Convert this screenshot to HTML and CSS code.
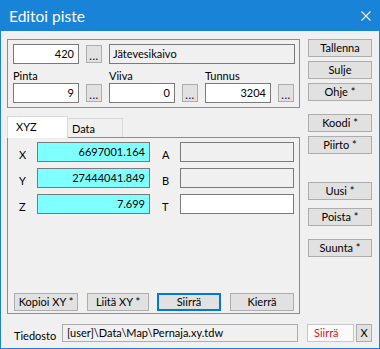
FILE: index.html
```html
<!DOCTYPE html>
<html lang="fi">
<head>
    <meta charset="UTF-8">
    <meta name="viewport" content="width=device-width, initial-scale=1.0">
    <title>Editoi piste</title>
    <link rel="stylesheet" href="styles.css">
</head>
<body>
    <div class="window">
        <div class="titlebar">
            <span>Editoi piste</span>
            <svg class="close" width="10" height="10" viewBox="0 0 10 10">
                <path d="M0.5 0.5 L9.5 9.5 M9.5 0.5 L0.5 9.5" stroke="#fff" stroke-width="1.1" fill="none"/>
            </svg>
        </div>

        <div class="client">
            <div class="main">
                <div class="group">
                    <div class="row">
                        <div class="edit num">420</div>
                        <div class="btn dots">...</div>
                        <div class="edit ro name">Jätevesikaivo</div>
                    </div>
                    <div class="row">
                        <div class="col">
                            <div class="lbl">Pinta</div>
                            <div class="pair">
                                <div class="edit num">9</div>
                                <div class="btn dots">...</div>
                            </div>
                        </div>
                        <div class="col">
                            <div class="lbl">Viiva</div>
                            <div class="pair">
                                <div class="edit num">0</div>
                                <div class="btn dots">...</div>
                            </div>
                        </div>
                        <div class="col">
                            <div class="lbl">Tunnus</div>
                            <div class="pair">
                                <div class="edit num">3204</div>
                                <div class="btn dots">...</div>
                            </div>
                        </div>
                    </div>
                </div>

                <div class="tabs">
                    <div class="tab active">XYZ</div>
                    <div class="tab">Data</div>
                </div>
                <div class="panel">
                    <div class="coord">
                        <div class="clbl">X</div>
                        <div class="edit num xyz">6697001.164</div>
                        <div class="clbl second">A</div>
                        <div class="edit ro extra"></div>
                    </div>
                    <div class="coord">
                        <div class="clbl">Y</div>
                        <div class="edit num xyz">27444041.849</div>
                        <div class="clbl second">B</div>
                        <div class="edit ro extra"></div>
                    </div>
                    <div class="coord">
                        <div class="clbl">Z</div>
                        <div class="edit num xyz">7.699</div>
                        <div class="clbl second">T</div>
                        <div class="edit extra"></div>
                    </div>
                    <div class="actions">
                        <div class="btn w64">Kopioi XY *</div>
                        <div class="btn w62">Liitä XY *</div>
                        <div class="btn w64 default">Siirrä</div>
                        <div class="btn w64">Kierrä</div>
                    </div>
                </div>
            </div>

            <div class="side">
                <div class="bgroup">
                    <div class="btn">Tallenna</div>
                    <div class="btn">Sulje</div>
                    <div class="btn">Ohje *</div>
                </div>
                <div class="bgroup g2">
                    <div class="btn">Koodi *</div>
                    <div class="btn">Piirto *</div>
                </div>
                <div class="bgroup g3">
                    <div class="btn">Uusi *</div>
                    <div class="btn">Poista *</div>
                </div>
                <div class="bgroup g4">
                    <div class="btn">Suunta *</div>
                </div>
            </div>
        </div>

        <div class="filerow">
            <div class="flbl">Tiedosto</div>
            <div class="edit ro path">[user]\Data\Map\Pernaja.xy.tdw</div>
            <div class="redbtn">Siirrä</div>
            <div class="btn xbtn">X</div>
        </div>
    </div>
</body>
</html>
```

FILE: styles.css
```css
body {
    margin: 0;
    font-family: Lato, "Liberation Sans", sans-serif;
    font-size: 11px;
    color: #000;
}
.window {
    width: 380px;
    height: 349px;
    box-sizing: border-box;
    border: 1px solid #1883d7;
    border-top: 0;
    background: #f0f0f0;
    overflow: hidden;
}
.titlebar {
    height: 31px;
    margin: 0 -1px;
    padding: 0 9px 0 9px;
    background: #1883d7;
    color: #fff;
    font-size: 15.5px;
    display: flex;
    align-items: center;
    justify-content: space-between;
}
.client {
    display: flex;
    gap: 8px;
    padding: 8px 6px 0 6px;
}
.main {
    width: 293px;
    display: flex;
    flex-direction: column;
}
.group {
    height: 69px;
    box-sizing: border-box;
    border: 1px solid #8c8c8c;
    padding: 4px 4px 4px 5px;
}
.row {
    display: flex;
    gap: 7px;
}
.col {
    width: 89px;
}
.lbl {
    height: 19px;
    box-sizing: border-box;
    padding-top: 5px;
    line-height: 14px;
}
.pair {
    display: flex;
    gap: 7px;
}
.edit {
    height: 20px;
    box-sizing: border-box;
    border: 1px solid #7a7a7a;
    background: #fff;
    padding: 0 4px 0 3px;
    line-height: 18px;
    white-space: nowrap;
    overflow: hidden;
}
.num {
    width: 66px;
    text-align: right;
}
.ro {
    background: #f0f0f0;
}
.name {
    width: 186px;
}
.btn {
    height: 18px;
    box-sizing: border-box;
    border: 1px solid #adadad;
    background: #e1e1e1;
    text-align: center;
    line-height: 16px;
    white-space: nowrap;
}
.dots {
    width: 16px;
    margin-top: 1px;
    line-height: 20px;
    letter-spacing: 0.5px;
}
.tabs {
    display: flex;
    margin-top: 8px;
    margin-bottom: -1px;
    height: 22px;
    position: relative;
    z-index: 1;
}
.tab {
    box-sizing: border-box;
    height: 19px;
    margin-top: 2px;
    width: 55px;
    padding-left: 4px;
    line-height: 20px;
    border: 1px solid #d9d9d9;
    border-left: 0;
    border-bottom: 0;
    background: #f0f0f0;
}
.tab.active {
    height: 22px;
    margin-top: 0;
    width: 61px;
    padding-left: 8px;
    line-height: 19px;
    border: 1px solid #d9d9d9;
    border-bottom: 0;
    background: #fff;
}
.panel {
    height: 177px;
    box-sizing: border-box;
    border: 1px solid #8c8c8c;
    padding: 4px 0 2px 0;
    display: flex;
    flex-direction: column;
    gap: 6px;
}
.coord {
    display: flex;
    height: 20px;
}
.clbl {
    width: 29px;
    box-sizing: border-box;
    padding-left: 11px;
    padding-top: 3px;
    line-height: 20px;
}
.clbl.second {
    width: 30px;
    padding-left: 12px;
}
.xyz {
    width: 113px;
    background: #80ffff;
}
.extra {
    width: 114px;
}
.actions {
    margin-top: auto;
    display: flex;
    gap: 9px;
    padding-left: 6px;
}
.w64 {
    width: 64px;
}
.w62 {
    width: 62px;
}
.default {
    border: 2px solid #0078d7;
    line-height: 14px;
}
.actions .default {
    margin-left: -1px;
}
.side {
    width: 64px;
    display: flex;
    flex-direction: column;
}
.bgroup {
    display: flex;
    flex-direction: column;
    gap: 4px;
}
.g2 {
    margin-top: 13px;
}
.g3 {
    margin-top: 28px;
    gap: 8px;
}
.g4 {
    margin-top: 13px;
}
.filerow {
    display: flex;
    align-items: flex-start;
    margin-top: 10px;
    padding-left: 13px;
}
.flbl {
    width: 48px;
    padding-top: 4px;
    line-height: 16px;
}
.path {
    width: 236px;
    height: 18px;
    line-height: 16px;
    padding-left: 4px;
    border-color: #adadad;
}
.redbtn {
    width: 47px;
    height: 18px;
    box-sizing: border-box;
    margin-left: 9px;
    border: 1px solid #c8c8c8;
    background: #fbfbfb;
    color: #e81123;
    line-height: 16px;
    padding-left: 6px;
}
.xbtn {
    width: 16px;
    margin-left: 2px;
    line-height: 16px;
}
```
